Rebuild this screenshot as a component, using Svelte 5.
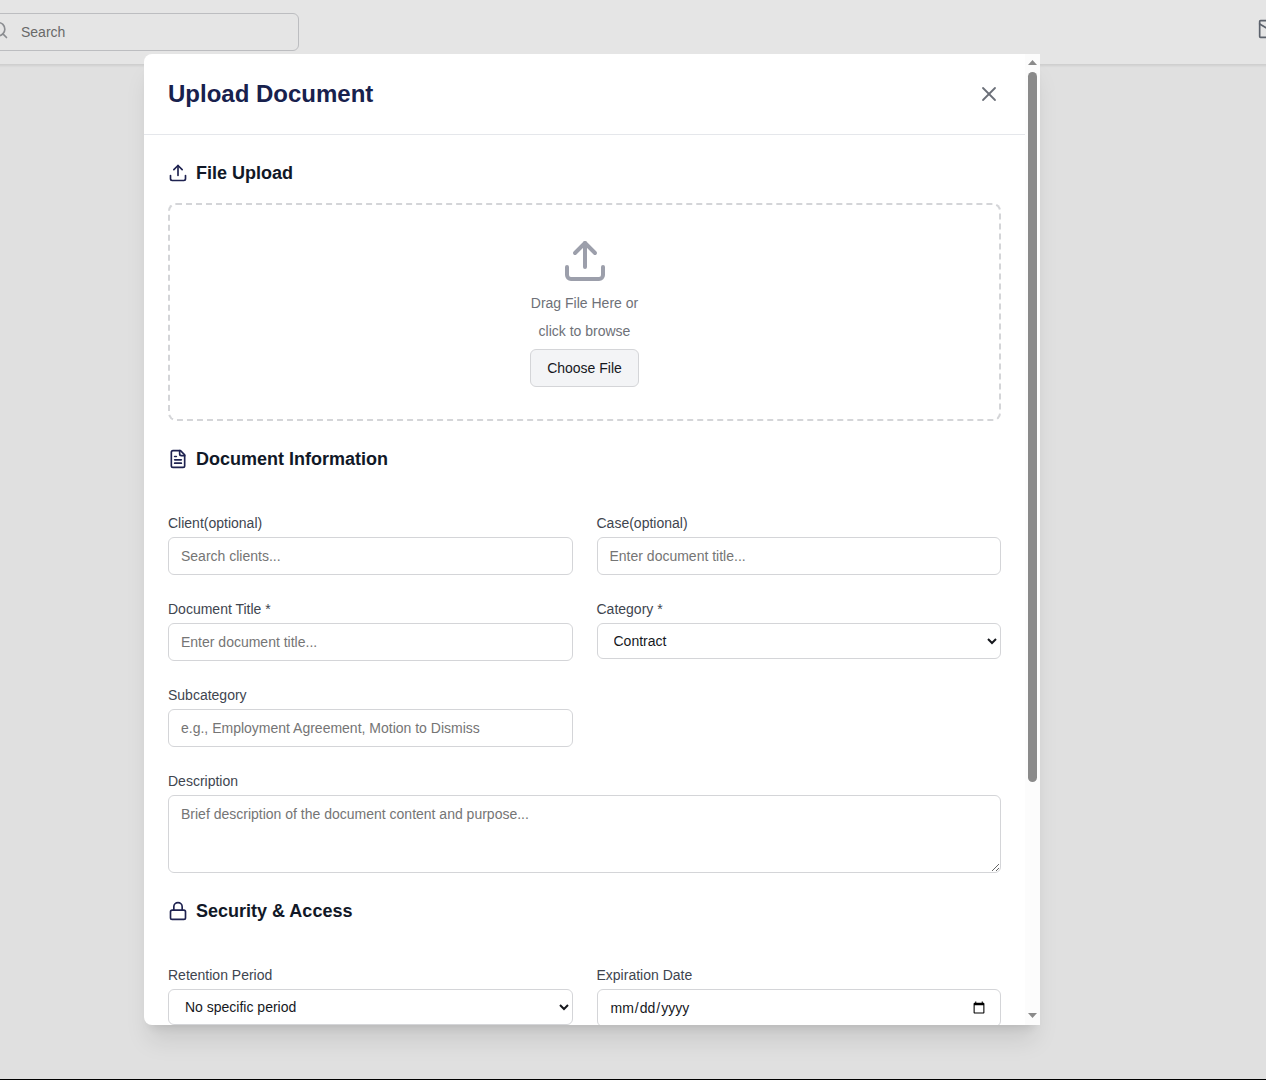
<script>
  let category = $state('Contract');
  let retention = $state('No specific period');
</script>

{#snippet uploadIcon(cls)}
  <svg class={cls} viewBox="0 0 24 24" aria-hidden="true">
    <path d="M21 15v4a2 2 0 0 1-2 2H5a2 2 0 0 1-2-2v-4" />
    <path d="m17 8-5-5-5 5" />
    <path d="M12 3v12" />
  </svg>
{/snippet}

<div class="page">
  <header class="topbar">
    <div class="search">
      <svg class="search-icon" viewBox="0 0 24 24" aria-hidden="true">
        <circle cx="11" cy="11" r="8" />
        <path d="m21 21-4.3-4.3" />
      </svg>
      <input type="text" placeholder="Search" aria-label="Search" />
    </div>
    <button class="mail" type="button" aria-label="Messages">
      <svg viewBox="0 0 24 24" aria-hidden="true">
        <rect x="2" y="2" width="20" height="20" rx="1" />
        <path d="m2 6 10 6 10-6" />
      </svg>
    </button>
  </header>

  <div class="overlay">
    <div class="modal" role="dialog" aria-modal="true" aria-labelledby="modal-title">
      <div class="content">
        <div class="modal-head">
          <h1 id="modal-title">Upload Document</h1>
          <button class="close" type="button" aria-label="Close">
            <svg viewBox="0 0 24 24" aria-hidden="true"><path d="M18 6 6 18" /><path d="m6 6 12 12" /></svg>
          </button>
        </div>

        <form class="form">
          <section class="upload">
            <h2>{@render uploadIcon('heading-icon')}File Upload</h2>
            <div class="dropzone">
              {@render uploadIcon('drop-icon')}
              <p>Drag File Here or</p>
              <p>click to browse</p>
              <button type="button" class="choose">Choose File</button>
            </div>
          </section>

          <section class="details">
            <h2>
              <svg class="heading-icon" viewBox="0 0 24 24" aria-hidden="true">
                <path d="M15 2H6a2 2 0 0 0-2 2v16a2 2 0 0 0 2 2h12a2 2 0 0 0 2-2V7Z" />
                <path d="M14 2v4a2 2 0 0 0 2 2h4" />
                <path d="M10 9H8" />
                <path d="M16 13H8" />
                <path d="M16 17H8" />
              </svg>Document Information
            </h2>
            <div class="grid">
              <div class="field">
                <label for="client">Client(optional)</label>
                <input id="client" type="text" placeholder="Search clients..." />
              </div>
              <div class="field">
                <label for="case">Case(optional)</label>
                <input id="case" type="text" placeholder="Enter document title..." />
              </div>
              <div class="field">
                <label for="title">Document Title *</label>
                <input id="title" type="text" placeholder="Enter document title..." />
              </div>
              <div class="field">
                <label for="category">Category *</label>
                <select id="category" bind:value={category}>
                  <option>Contract</option>
                </select>
              </div>
              <div class="field">
                <label for="subcategory">Subcategory</label>
                <input id="subcategory" type="text" placeholder="e.g., Employment Agreement, Motion to Dismiss" />
              </div>
              <div class="field wide">
                <label for="description">Description</label>
                <textarea id="description" rows="3" placeholder="Brief description of the document content and purpose..."></textarea>
              </div>
            </div>
          </section>

          <section class="details">
            <h2>
              <svg class="heading-icon" viewBox="0 0 24 24" aria-hidden="true">
                <rect x="3" y="11" width="18" height="11" rx="2" />
                <path d="M7 11V7a5 5 0 0 1 10 0v4" />
              </svg>Security &amp; Access
            </h2>
            <div class="grid">
              <div class="field">
                <label for="retention">Retention Period</label>
                <select id="retention" bind:value={retention}>
                  <option>No specific period</option>
                </select>
              </div>
              <div class="field">
                <label for="expiration">Expiration Date</label>
                <input id="expiration" type="date" />
              </div>
            </div>
          </section>
        </form>
      </div>

      <div class="scrollbar" aria-hidden="true">
        <svg class="arrow" viewBox="0 0 9 5"><path d="M4.5 0 9 5H0Z" /></svg>
        <div class="track"><div class="thumb"></div></div>
        <svg class="arrow" viewBox="0 0 9 5"><path d="M0 0H9L4.5 5Z" /></svg>
      </div>
    </div>
  </div>
</div>

<style>
  :global(body) {
    margin: 0;
    background: #e0e0e0;
    font-family: 'Liberation Sans', Arial, sans-serif;
    font-size: 14px;
    line-height: 20px;
  }

  .page,
  .page :global(*) {
    box-sizing: border-box;
  }

  .page {
    position: relative;
    height: 100vh;
    overflow: hidden;
    border-bottom: 1px solid #000;
    background: #e0e0e0;
  }

  svg {
    display: block;
    flex: none;
    fill: none;
    stroke: currentColor;
    stroke-width: 2;
    stroke-linecap: round;
    stroke-linejoin: round;
  }

  h1,
  h2,
  p {
    margin: 0;
  }

  button,
  input,
  select,
  textarea {
    font: inherit;
  }

  .topbar {
    display: flex;
    align-items: center;
    justify-content: space-between;
    height: 65px;
    margin: 0 -12px 0 -20px;
    background: #e5e5e5;
    border-bottom: 1px solid #cfcfcf;
    box-shadow: 0 1px 2px rgba(0, 0, 0, 0.08);
  }

  .search {
    position: relative;
    width: 319px;
  }

  .search-icon {
    position: absolute;
    left: 9px;
    top: 7px;
    width: 20px;
    height: 20px;
    color: #8b8d91;
  }

  .search input {
    display: block;
    width: 100%;
    height: 38px;
    padding: 0 12px 0 40px;
    border: 1px solid #bcbdc0;
    border-radius: 6px;
    background: transparent;
  }

  .search input::placeholder {
    color: #696969;
  }

  .mail {
    padding: 0;
    margin-bottom: 6px;
    border: 0;
    background: none;
    color: #5c626c;
  }

  .mail svg {
    width: 20px;
    height: 20px;
  }

  .overlay {
    position: absolute;
    inset: 0;
    display: flex;
    align-items: center;
    justify-content: center;
    padding: 0 82px 0 0;
  }

  .modal {
    display: flex;
    width: 100%;
    max-width: 896px;
    height: 90%;
    overflow: hidden;
    border-radius: 8px 0 0 8px;
    background: #fff;
    box-shadow:
      0 20px 25px -5px rgba(0, 0, 0, 0.1),
      0 8px 10px -6px rgba(0, 0, 0, 0.1);
  }

  .content {
    flex: 1;
    min-width: 0;
    overflow: hidden;
  }

  .modal-head {
    display: flex;
    align-items: center;
    justify-content: space-between;
    padding: 24px;
    border-bottom: 1px solid #e5e7eb;
  }

  h1 {
    font-size: 24px;
    line-height: 32px;
    font-weight: 700;
    color: #18214d;
  }

  .close {
    padding: 0;
    border: 0;
    background: none;
    color: #6b6f78;
  }

  .close svg {
    width: 24px;
    height: 24px;
    stroke-width: 1.8;
  }

  .form {
    display: flex;
    flex-direction: column;
    gap: 24px;
    padding: 24px;
  }

  section {
    display: flex;
    flex-direction: column;
    gap: 16px;
  }

  section.details {
    gap: 40px;
  }

  h2 {
    display: flex;
    align-items: center;
    gap: 8px;
    font-size: 18px;
    line-height: 28px;
    font-weight: 700;
    color: #111827;
  }

  :global(.heading-icon) {
    width: 20px;
    height: 20px;
    color: #1e2250;
  }

  .dropzone {
    display: flex;
    flex-direction: column;
    align-items: center;
    gap: 8px;
    padding: 32px;
    border: 2px dashed #d4d5d8;
    border-radius: 8px;
    color: #6e7178;
  }

  :global(.drop-icon) {
    width: 48px;
    height: 48px;
    color: #9c9fab;
  }

  .choose {
    height: 38px;
    padding: 0 16px;
    border: 1px solid #d4d5d8;
    border-radius: 6px;
    background: #f3f4f6;
    color: #16181d;
  }

  .grid {
    display: grid;
    grid-template-columns: 1fr 1fr;
    gap: 24px;
  }

  .field {
    display: flex;
    flex-direction: column;
    gap: 4px;
    min-width: 0;
    color: #40454f;
  }

  .wide {
    grid-column: 1 / -1;
  }

  .field input,
  .field select,
  .field textarea {
    width: 100%;
    border: 1px solid #d4d5d8;
    border-radius: 6px;
    background: #fff;
    color: #16181d;
  }

  .field input {
    height: 38px;
    padding: 0 12px;
  }

  .field select {
    height: 36px;
    padding: 0 0 0 12px;
  }

  .field textarea {
    height: 78px;
    padding: 8px 12px;
    resize: vertical;
  }

  .field input::placeholder,
  .field textarea::placeholder {
    color: #757575;
  }

  .scrollbar {
    display: flex;
    flex-direction: column;
    align-items: center;
    gap: 7px;
    width: 15px;
    padding: 6px 0 7px;
    background: #fcfcfc;
  }

  .arrow {
    width: 9px;
    height: 5px;
    fill: #8a8a8a;
    stroke: none;
  }

  .track {
    flex: 1;
    width: 9px;
  }

  .thumb {
    height: 76%;
    border-radius: 5px;
    background: #8a8a8a;
  }
</style>
